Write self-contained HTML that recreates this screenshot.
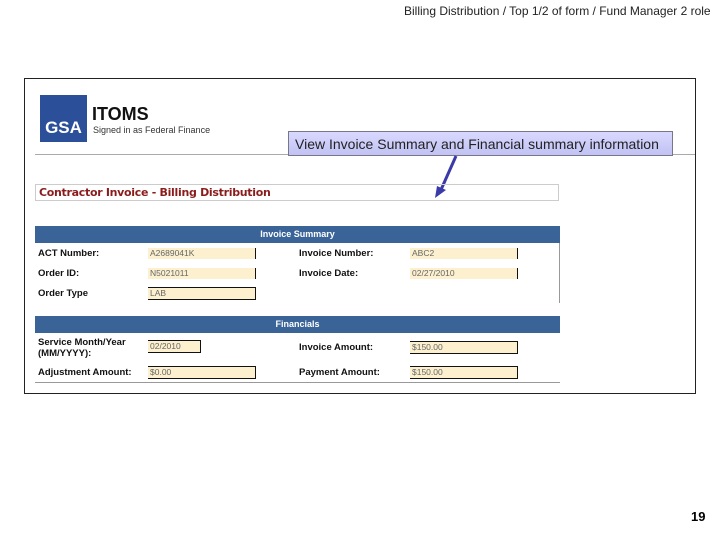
<!DOCTYPE html>
<html><head><style>
body{margin:0;width:720px;height:540px;background:#fff;position:relative;font-family:"Liberation Sans",sans-serif;overflow:hidden}
.a{position:absolute}
.lb{position:absolute;font-size:9.5px;font-weight:bold;color:#111}
.v{position:absolute;background:#fdf0cf;font-size:8.5px;color:#666;height:11px;line-height:11px;padding-left:2px;border-right:1px solid #111}
.v.f{border:1px solid #111;border-left:none}
.hd{position:absolute;left:35px;width:525px;height:17px;background:#3a6498;color:#fff;font-size:9px;font-weight:bold;text-align:center;line-height:17px}
</style></head><body>
<div class="a" style="left:404px;top:4px;font-size:12px;color:#222">Billing Distribution / Top 1/2 of form / Fund Manager 2 role</div>
<div class="a" style="left:24px;top:78px;width:670px;height:314px;border:1px solid #222"></div>
<div class="a" style="left:40px;top:95px;width:47px;height:47px;background:#2c4f9a;color:#fff;font-weight:bold;font-size:17px;line-height:66px;text-align:center">GSA</div>
<div class="a" style="left:92px;top:104px;font-size:18px;font-weight:bold;color:#111">ITOMS</div>
<div class="a" style="left:93px;top:125px;font-size:9px;color:#333">Signed in as Federal Finance</div>
<div class="a" style="left:35px;top:154px;width:660px;height:1px;background:#aaa"></div>
<div class="a" style="left:288px;top:131px;width:385px;height:25px;border:1px solid #778;background:linear-gradient(#d8d8ff,#c2c2f4);font-size:14px;line-height:24px;padding-left:6px;box-sizing:border-box;color:#222;white-space:nowrap">View Invoice Summary and Financial summary information</div>
<svg class="a" style="left:430px;top:150px" width="30" height="52"><line x1="26" y1="6" x2="10" y2="42" stroke="#3a3aa8" stroke-width="3"/><polygon points="5,48 7,36 16,40" fill="#3a3aa8"/></svg>
<div class="a" style="left:35px;top:184px;width:524px;height:17px;border:1px solid #ccc;box-sizing:border-box;font-size:11px;font-weight:bold;color:#8a1c1c;line-height:16px;padding-left:3px;font-family:'DejaVu Sans',sans-serif;letter-spacing:-.3px">Contractor Invoice - Billing Distribution</div>
<div class="hd" style="top:226px">Invoice Summary</div>
<div class="a" style="left:559px;top:243px;width:1px;height:60px;background:#999"></div>
<div class="lb" style="left:38px;top:248px">ACT Number:</div><div class="v" style="left:148px;top:248px;width:105px">A2689041K</div>
<div class="lb" style="left:299px;top:248px">Invoice Number:</div><div class="v" style="left:410px;top:248px;width:105px">ABC2</div>
<div class="lb" style="left:38px;top:268px">Order ID:</div><div class="v" style="left:148px;top:268px;width:105px">N5021011</div>
<div class="lb" style="left:299px;top:268px">Invoice Date:</div><div class="v" style="left:410px;top:268px;width:105px">02/27/2010</div>
<div class="lb" style="left:38px;top:288px">Order Type</div><div class="v f" style="left:148px;top:287px;width:105px">LAB</div>
<div class="hd" style="top:316px">Financials</div>
<div class="lb" style="left:38px;top:337px;line-height:11px">Service Month/Year<br>(MM/YYYY):</div><div class="v f" style="left:148px;top:340px;width:50px">02/2010</div>
<div class="lb" style="left:299px;top:342px">Invoice Amount:</div><div class="v f" style="left:410px;top:341px;width:105px">$150.00</div>
<div class="lb" style="left:38px;top:367px">Adjustment Amount:</div><div class="v f" style="left:148px;top:366px;width:105px">$0.00</div>
<div class="lb" style="left:299px;top:367px">Payment Amount:</div><div class="v f" style="left:410px;top:366px;width:105px">$150.00</div>
<div class="a" style="left:35px;top:382px;width:525px;height:1px;background:#999"></div>
<div class="a" style="left:691px;top:509px;font-size:13px;font-weight:bold">19</div>
</body></html>
